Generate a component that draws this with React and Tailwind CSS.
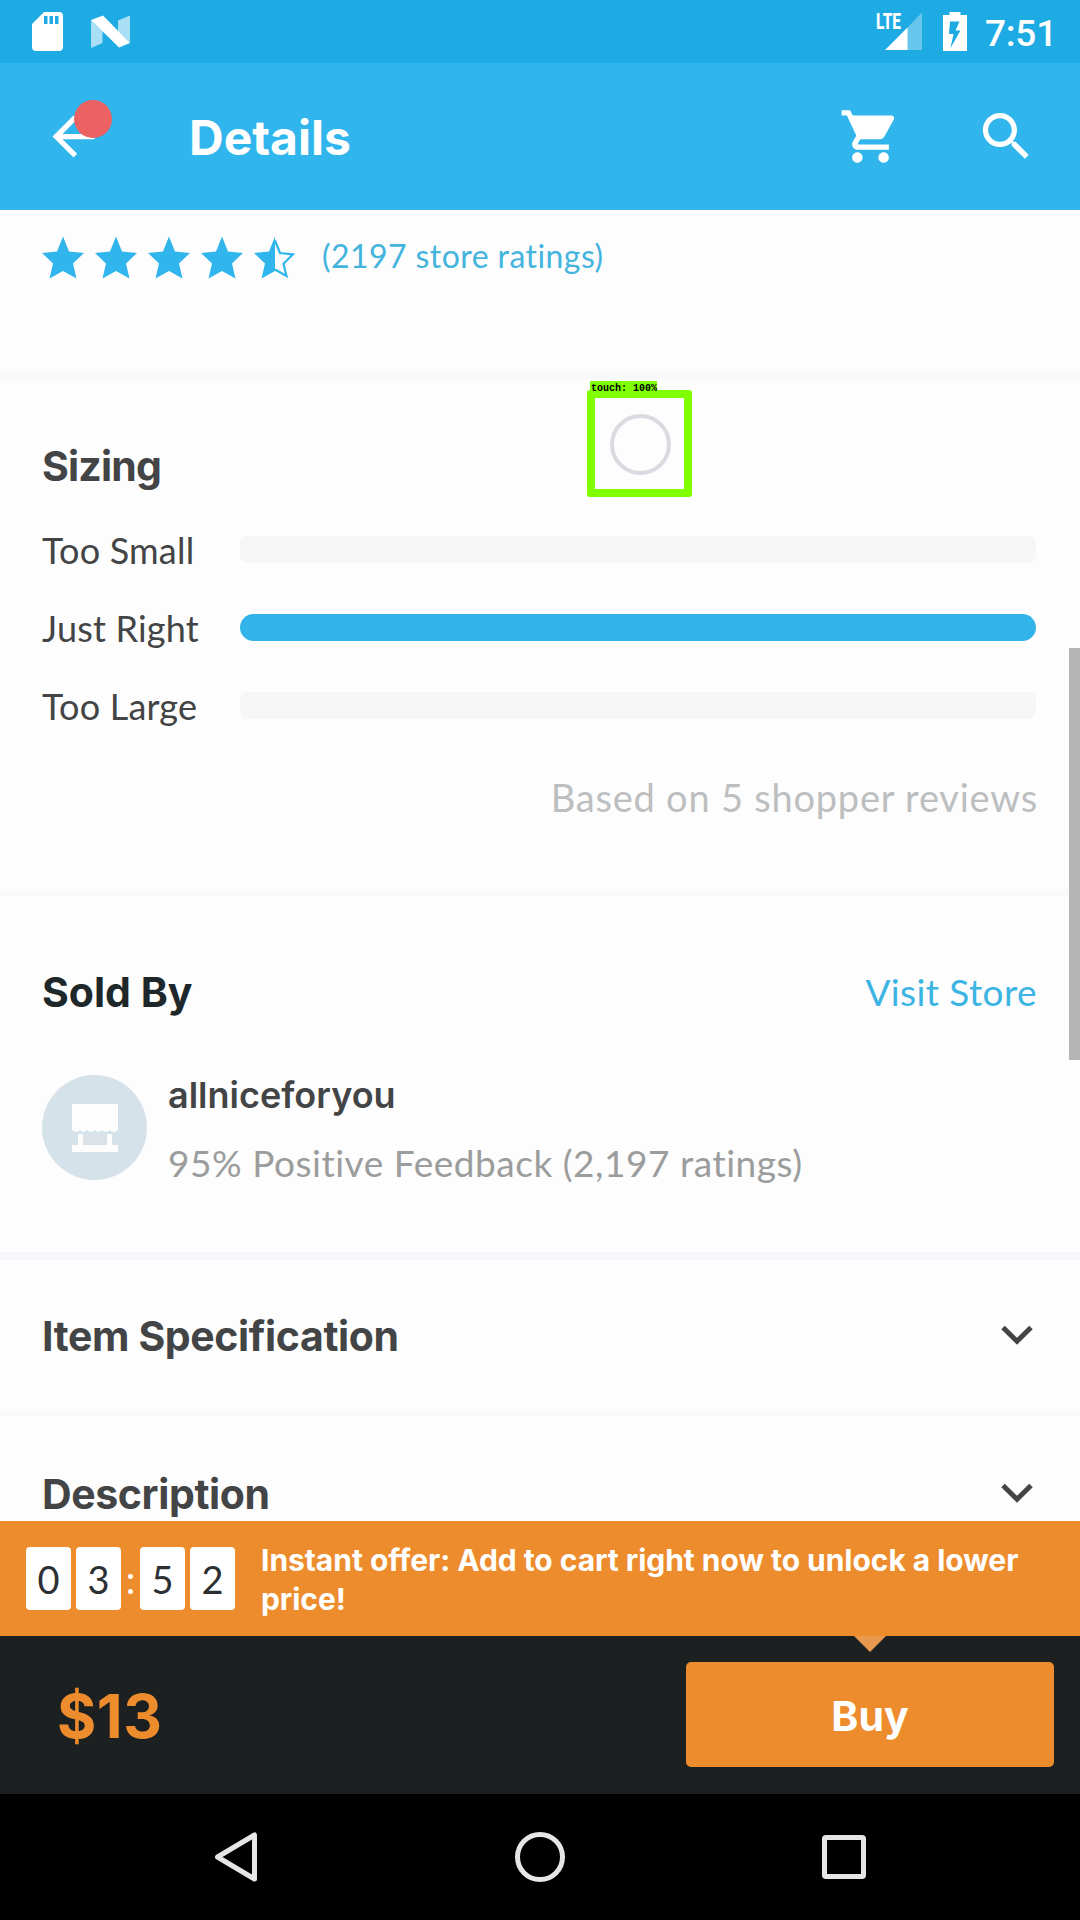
import React from "react";

const STAR = "M21 0 L27 15 L42 16.5 L31 27 L34.5 42 L21 34.5 L7.5 42 L11 27 L0 16.5 L15 15 Z";

function StatusBar() {
  return (
    <div className="flex h-[63px] items-center bg-[#1eaae3] pr-[23px] pl-[32px] text-white">
      <svg width="31" height="39" viewBox="0 0 31 39" fill="currentColor">
        <path
          fillRule="evenodd"
          d="M12 0H27a4 4 0 0 1 4 4V35a4 4 0 0 1-4 4H4a4 4 0 0 1-4-4V12ZM12 4v8h3.500v-8ZM17.500 4v8h3.500v-8ZM23 4v8h3.500v-8Z"
        />
      </svg>
      <svg className="ml-[28px]" width="39" height="33" viewBox="0 0 39 33" fill="currentColor">
        <path opacity=".62" d="M0 5L11.500 16V28L0 33ZM27 5.500L39 .5V28L27 16Z" />
        <path d="M0 5L12 .5L39 28L28 32.500Z" />
      </svg>
      <div className="flex-1" />
      <svg width="49" height="55" viewBox="-2 -8 49 55" fill="currentColor">
        <path opacity=".33" d="M31 16L46 0.500V38H31Z" />
        <path d="M9 38L31.500 15.500V38Z" />
        <text
          x="0"
          y="17"
          fontFamily="Roboto, sans-serif"
          fontWeight="800"
          fontSize="22.500"
          textLength="25"
          lengthAdjust="spacingAndGlyphs"
        >
          LTE
        </text>
      </svg>
      <svg className="ml-[20px]" width="24" height="39" viewBox="0 0 24 39" fill="currentColor">
        <path
          fillRule="evenodd"
          d="M6.500 0H17.500V3H24V39H0V3H6.500ZM7 9.500L6 22H10.500L7.500 36L17.500 18.500H12.500L16.500 9.500Z"
        />
      </svg>
      <span className="mt-[3px] ml-[18px] font-['Roboto',sans-serif] text-[37px] leading-none font-medium tracking-[-0.2px]">
        7:51
      </span>
    </div>
  );
}

function Toolbar() {
  return (
    <header className="flex h-[147px] items-center bg-[#30b5ec] pr-[42px] pl-[42px] text-white">
      <div className="relative size-[63px]">
        <svg className="size-[63px]" viewBox="0 0 24 24" fill="currentColor">
          <path d="M20 11H7.830l5.590-5.590L12 4l-8 8 8 8 1.410-1.410L7.830 13H20v-2z" />
        </svg>
        <span className="absolute top-[-5px] left-[32px] size-[38px] rounded-full bg-[#ec6161]" />
      </div>
      <h1 className="mt-[2px] ml-[84px] flex-1 font-['Inter',sans-serif] text-[48px] leading-[60px] font-bold">
        Details
      </h1>
      <svg className="size-[63px]" viewBox="0 0 24 24" fill="currentColor">
        <path d="M7 18c-1.100 0-1.990.9-1.990 2S5.900 22 7 22s2-.9 2-2-.9-2-2-2zM1 2v2h2l3.600 7.590-1.350 2.450c-.16.280-.25.610-.25.960 0 1.100.9 2 2 2h12v-2H7.420c-.14 0-.25-.11-.25-.25l.03-.12.9-1.630h7.450c.75 0 1.410-.41 1.750-1.030l3.580-6.490c.08-.14.120-.31.120-.48 0-.55-.45-1-1-1H5.210l-.94-2H1zm16 16c-1.100 0-1.990.9-1.990 2s.890 2 1.990 2 2-.9 2-2-.9-2-2-2z" />
      </svg>
      <svg className="ml-[73px] size-[63px]" viewBox="0 0 24 24" fill="currentColor">
        <path d="M15.500 14h-.79l-.28-.27C15.410 12.590 16 11.110 16 9.500 16 5.910 13.090 3 9.500 3S3 5.910 3 9.500 5.910 16 9.500 16c1.610 0 3.090-.59 4.230-1.570l.27.28v.79l5 4.990L20.490 19l-4.990-5zm-6 0C7.010 14 5 11.990 5 9.500S7.010 5 9.500 5 14 7.010 14 9.500 11.990 14 9.500 14z" />
      </svg>
    </header>
  );
}

function Ratings() {
  return (
    <section className="flex h-[170px] items-start border-b-8 border-[#f7f9fa] pt-[26px] pl-[42px] text-[#30b5ec]">
      <div className="flex gap-[11px]">
        {[0, 1, 2, 3].map((i) => (
          <svg key={i} width="42" height="43" viewBox="0 0 42 42" fill="currentColor">
            <path d={STAR} />
          </svg>
        ))}
        <svg width="42" height="43" viewBox="0 0 42 42">
          <path
            d="M21 4L26 16.500L39 17.800L29.500 27.300L32.500 39.500L21 33"
            fill="none"
            stroke="currentColor"
            strokeWidth="2.200"
          />
          <path d="M21 0V34.500L7.500 42L11 27L0 16.500L15 15Z" fill="currentColor" />
        </svg>
      </div>
      <span className="mt-[1px] ml-[26px] text-[32px] leading-[37px] tracking-[0.43px] text-[#45b4dd]">
        (2197 store ratings)
      </span>
    </section>
  );
}

const sizing = [
  { label: "Too Small", selected: false },
  { label: "Just Right", selected: true },
  { label: "Too Large", selected: false },
];

function Sizing() {
  return (
    <section className="h-[516px] border-b-[7px] border-[#f8f9f9] pt-[56px] pr-[44px] pl-[42px]">
      <h2 className="mb-[14px] font-['Inter',sans-serif] text-[41px] leading-[60px] font-bold tracking-[-0.8px]">
        Sizing
      </h2>
      {sizing.map(({ label, selected }) => (
        <div key={label} className="flex h-[78px] items-center">
          <span className="mt-[2px] w-[198px] text-[36px] leading-none tracking-[0.2px]">{label}</span>
          <div className={selected ? "h-[27px] flex-1 rounded-full bg-[#32b4eb]" : "h-[27px] flex-1 rounded-lg bg-[#f6f6f7]"} />
        </div>
      ))}
      <p className="mt-[29px] mr-[-2px] text-right text-[38px] leading-[48px] tracking-[0.78px] text-[#bcbebf]">
        Based on 5 shopper reviews
      </p>
    </section>
  );
}

function StoreAvatar() {
  return (
    <div className="flex size-[105px] shrink-0 items-center justify-center rounded-full bg-[#d6e2ea]">
      <svg width="46" height="48" viewBox="0 0 46 48" fill="#fdfdfd">
        <path d="M0 0H46V26q-4 4-8 0q-4 4-8 0q-4 4-7 0q-4 4-8 0q-4 4-7 0q-4 4-8 0Z" />
        <path d="M6 30H11V41H35V30H40V41H46V48H0V41H6Z" />
        <path d="M12 32q11-6 22 0V40H12Z" fill="#dde2e8" />
      </svg>
    </div>
  );
}

function SoldBy() {
  return (
    <section className="h-[364px] border-b-8 border-[#f6f7fa] pt-[64px] pr-[43px] pl-[42px]">
      <div className="flex h-[60px] items-center justify-between">
        <h2 className="mt-[4px] font-['Inter',sans-serif] text-[41px] leading-[60px] font-bold text-[#1e272a]">
          Sold By
        </h2>
        <span className="mt-[2px] text-[37px] leading-none tracking-[0.4px] text-[#3cb4e3]">Visit Store</span>
      </div>
      <div className="mt-[55px] flex h-[105px] items-center">
        <StoreAvatar />
        <div className="ml-[21px]">
          <p className="mt-[2px] mb-[-2px] font-['Inter',sans-serif] text-[36px] leading-[69px] font-semibold">
            allniceforyou
          </p>
          <p className="text-[37px] leading-[69px] tracking-[0.53px] text-[#9b9c9c]">
            95% Positive Feedback (2,197 ratings)
          </p>
        </div>
      </div>
    </section>
  );
}

function Expandable({ title }) {
  return (
    <div className="flex h-full items-center justify-between pr-[47px] pl-[42px]">
      <h2 className="mt-[3px] font-['Inter',sans-serif] text-[41px] leading-[60px] font-bold tracking-[-0.38px]">
        {title}
      </h2>
      <svg className="mt-[1px]" width="32" height="20" viewBox="0 0 32 20" fill="none" stroke="currentColor" strokeWidth="5">
        <path d="M2 2.500L16 16.200L30 2.500" />
      </svg>
    </div>
  );
}

function Digit({ children }) {
  return (
    <span className="flex h-[63px] w-[45px] items-center justify-center rounded-[4px] bg-white text-[38px] leading-none text-[#2c3033]">
      {children}
    </span>
  );
}

function OfferBanner() {
  return (
    <div className="flex h-[115px] items-center bg-[#ed8c2d] pl-[26px] text-white">
      <div className="flex items-center">
        <Digit>0</Digit>
        <span className="w-[5px]" />
        <Digit>3</Digit>
        <span className="w-[19px] text-center text-[38px] leading-none">:</span>
        <Digit>5</Digit>
        <span className="w-[5px]" />
        <Digit>2</Digit>
      </div>
      <p className="mt-[2px] ml-[26px] w-[790px] font-['Inter',sans-serif] text-[30px] leading-[38.500px] font-bold tracking-[-0.04px]">
        Instant offer: Add to cart right now to unlock a lower price!
      </p>
    </div>
  );
}

function BuyBar() {
  return (
    <div className="relative flex h-[158px] items-center justify-between bg-[#1d2020] pr-[26px] pl-[57px]">
      <svg className="absolute top-0 left-[854px]" width="32" height="16" viewBox="0 0 32 16" fill="#e8994d">
        <path d="M0 0H32L16 16Z" />
      </svg>
      <span className="mt-[2px] font-['Inter',sans-serif] text-[60px] leading-none font-bold tracking-[0.5px] text-[#ed8c2d]">
        $13
      </span>
      <button className="mb-[2px] h-[105px] w-[368px] rounded-[5px] bg-[#ed8c2d] pt-[5px] font-['Inter',sans-serif] text-[41px] font-bold text-white">
        Buy
      </button>
    </div>
  );
}

function NavBar() {
  return (
    <nav className="flex h-[126px] items-center bg-black pl-[214px] text-[#e6e6e6]">
      <svg width="44" height="52" viewBox="0 0 44 52" fill="none" stroke="currentColor" strokeWidth="5" strokeLinejoin="round">
        <path d="M40.500 4V48L3.500 26Z" />
      </svg>
      <div className="ml-[257px] size-[50px] rounded-full border-[5px] border-current" />
      <div className="ml-[257px] size-[44px] rounded-[4px] border-[5px] border-current" />
    </nav>
  );
}

function TouchMarker() {
  return (
    <div className="absolute top-[381px] left-[587px]">
      <div className="ml-[3px] h-[12px] w-[67px] bg-[#80ff00] pt-[2px] pl-[1px] font-['Liberation_Mono',monospace] text-[10px] leading-[11px] font-bold whitespace-pre text-black">
        touch: 100%
      </div>
      <div className="mt-[-3px] flex h-[107px] w-[105px] items-center justify-center rounded-[3px] border-8 border-[#80ff00] pt-[1px] pl-[1px]">
        <div className="size-[61px] shrink-0 rounded-full border-4 border-[#dcd9e1]" />
      </div>
    </div>
  );
}

export default function App() {
  return (
    <div className="relative flex h-[1920px] w-[1080px] flex-col overflow-hidden bg-[#fdfdfd] font-['Lato',sans-serif] text-[#434445]">
      <StatusBar />
      <Toolbar />
      <main className="h-[1311px] overflow-hidden">
        <Ratings />
        <Sizing />
        <SoldBy />
        <div className="h-[156px] border-b-[7px] border-[#f9f9fa]">
          <Expandable title="Item Specification" />
        </div>
        <div className="h-[152px]">
          <Expandable title="Description" />
        </div>
      </main>
      <OfferBanner />
      <BuyBar />
      <NavBar />
      <div className="absolute top-[648px] right-0 h-[412px] w-[11px] bg-[#b4b4b4]" />
      <TouchMarker />
    </div>
  );
}
